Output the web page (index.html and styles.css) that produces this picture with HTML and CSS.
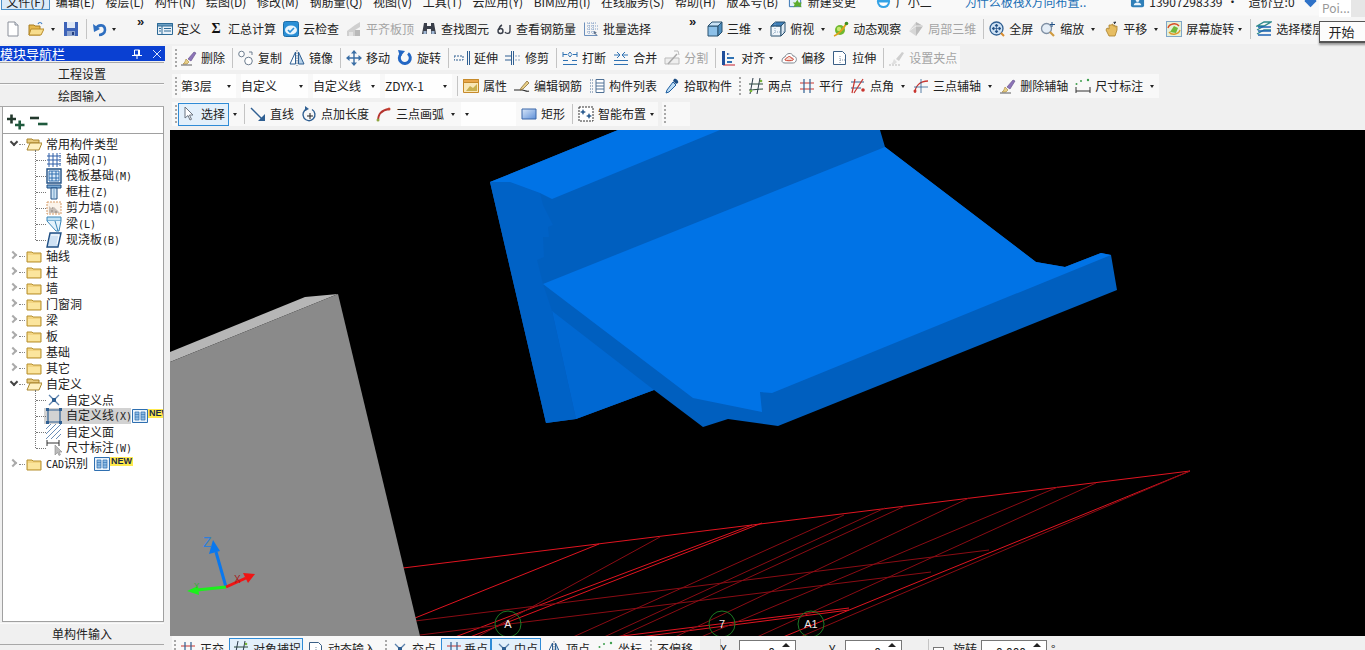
FILE: index.html
```html
<!DOCTYPE html>
<html lang="zh-CN">
<head>
<meta charset="utf-8">
<title>模块导航栏</title>
<link rel="stylesheet" href="styles.css">
</head>
<body>
<svg class="sprite" aria-hidden="true">
  <symbol id="new" viewBox="0 0 16 16"><path d="M3 1h7l3 3v11H3z" fill="#fff" stroke="#8a8f99"/><path d="M10 1v3h3" fill="#dfe6ef" stroke="#8a8f99"/></symbol>
  <symbol id="open" viewBox="0 0 16 16"><path d="M1 4h5l1 1h5v9H1z" fill="#e6b84e" stroke="#a67c22"/><path d="M3 8h13l-3 6H1z" fill="#f7dd8d" stroke="#b98c2b"/><path d="M10 3c1-2 3-2 4 0" fill="none" stroke="#3f7fc7" stroke-width="1.2"/></symbol>
  <symbol id="save" viewBox="0 0 16 16"><path d="M1 1h14v14H1z" fill="#3d63b8"/><path d="M4 1h8v6H4z" fill="#dfe8f6"/><path d="M4 10h8v5H4z" fill="#8da4cf"/><path d="M9 11h2v3H9z" fill="#233f80"/></symbol>
  <symbol id="undo" viewBox="0 0 16 16"><path d="M4 8c2-5 9-5 9 1 0 3-3 5-6 5" fill="none" stroke="#2f6fc0" stroke-width="2.6"/><path d="M1 3l1 8 6-3z" fill="#2f6fc0"/></symbol>
  <symbol id="define" viewBox="0 0 16 16"><path d="M.5 2.5h15v11H.5z" fill="#e8f0f8" stroke="#2d6a96"/><path d="M.5 2.5h15v2.500H.5z" fill="#6da0c4" stroke="#2d6a96"/><path d="M5 5v8M2 7.500h2M2 10h2M7 7.500h7M7 10h7" stroke="#2d6a96"/></symbol>
  <symbol id="cloud" viewBox="0 0 16 16"><rect x=".5" y=".5" width="15" height="15" rx="2" fill="#2a8fd6" stroke="#1c6da8"/><ellipse cx="8" cy="9" rx="6" ry="4.500" fill="#e9f5fd"/><path d="M5 9l2 2 4-4" fill="none" stroke="#2a8fd6" stroke-width="1.600"/></symbol>
  <symbol id="flat" viewBox="0 0 16 16"><path d="M1 10l8-6 5-3v5l-5 3v6H1z" fill="#cfcfcf"/><path d="M9 9h5v6H9z" fill="#b9b9b9"/><path d="M3 11h4v4H3z" fill="#e4e4e4"/></symbol>
  <symbol id="binoc" viewBox="0 0 16 16"><path d="M3 2h3v3h4V2h3l2 11H10V8H6v5H1z" fill="#3a3f4a"/><path d="M2.500 10h3v3h-3zM10.500 10h3v3h-3z" fill="#9fb7d4"/></symbol>
  <symbol id="rebar" viewBox="0 0 16 16"><circle cx="4.500" cy="10" r="2.500" fill="none" stroke="#3a3f4a" stroke-width="1.400"/><path d="M3 9c0-3 1-4 3-5M14 4v6c0 3-4 3-5 1" fill="none" stroke="#3a3f4a" stroke-width="1.400"/></symbol>
  <symbol id="batch" viewBox="0 0 16 16"><path d="M1.500 1.500v13h13" fill="none" stroke="#6b8fbc"/><path d="M4 2h9M4 5h11M4 8h11M4 11h7M6 2v12M10 2v12" stroke="#7f9cc4" stroke-dasharray="1 1"/><path d="M11 10l3 1.500-1.500 .5 1.500 2-1 .5-1-2-1 1z" fill="#5d6f88"/></symbol>
  <symbol id="cube" viewBox="0 0 16 16"><path d="M1 5v10h10V5z" fill="#8cc0e8" stroke="#28506f"/><path d="M1 5l4-4h10l-4 4z" fill="#c9e2f5" stroke="#28506f"/><path d="M11 5l4-4v10l-4 4z" fill="#4f8fc0" stroke="#28506f"/></symbol>
  <symbol id="topview" viewBox="0 0 16 16"><path d="M1 5v10h10V5z" fill="#f1f6fb" stroke="#28506f"/><path d="M1 5l4-4h10l-4 4z" fill="#3f7fb8" stroke="#28506f"/><path d="M11 5l4-4v10l-4 4z" fill="#dfeaf4" stroke="#28506f"/><path d="M5 1v10H15M5 11l-4 4" fill="none" stroke="#8aa6bf" stroke-dasharray="1 1"/></symbol>
  <symbol id="orbit" viewBox="0 0 16 16"><circle cx="7" cy="9" r="5" fill="#6fb82f"/><circle cx="6" cy="8" r="2.200" fill="#c5e86f"/><path d="M1 15c3-1 9-6 12-12" fill="none" stroke="#e0a11b" stroke-width="1.800"/><circle cx="13.500" cy="2.500" r="1.800" fill="#3f8f1f"/></symbol>
  <symbol id="local3d" viewBox="0 0 16 16"><path d="M8 1l7 4-7 10-7-5z" fill="#d6d6d6"/><path d="M8 1v14l7-10z" fill="#bcbcbc"/><path d="M1 10l7-5 7 0" fill="none" stroke="#eee"/></symbol>
  <symbol id="full" viewBox="0 0 16 16"><circle cx="7.500" cy="7.500" r="6.500" fill="#cfe2f4" stroke="#2f5f92" stroke-width="1.300"/><path d="M7.500 3.500v8M3.500 7.500h8M7.500 3l-1.500 2h3zM7.500 12l-1.500-2h3zM3 7.500l2-1.500v3zM12 7.500l-2-1.500v3z" fill="#1f4f84" stroke="#1f4f84" stroke-width=".7"/><path d="M12 12l3 3" stroke="#d88b2c" stroke-width="2"/></symbol>
  <symbol id="zoom" viewBox="0 0 16 16"><circle cx="6.500" cy="7.500" r="5" fill="#e4edf6" stroke="#7f8fa3" stroke-width="1.300"/><path d="M10 11l4 4" stroke="#cf9a3e" stroke-width="2.200"/><path d="M12 1v5M10 3.500h5" stroke="#1f4f84"/></symbol>
  <symbol id="pan" viewBox="0 0 16 16"><path d="M3 9l3 6h6l2-6V5l-2 1V4l-2 1V3L8 4 6 4v4L4 7z" fill="#e6bd62" stroke="#a87f2a" stroke-width=".8"/><path d="M10 1l3-.5-1 2.500z" fill="#3a3f4a"/><path d="M11 3l2-2" stroke="#3a3f4a"/></symbol>
  <symbol id="srot" viewBox="0 0 16 16"><rect x=".5" y=".5" width="15" height="15" fill="#e6f0d8" stroke="#7fa6c8"/><path d="M4 11l4-6 4 2-2 5z" fill="#71b83a"/><path d="M2 7c1-4 8-6 11-2" fill="none" stroke="#d84b24" stroke-width="1.400"/><path d="M14 9c-1 4-8 6-11 2" fill="none" stroke="#e09a28" stroke-width="1.400"/></symbol>
  <symbol id="floors" viewBox="0 0 16 16"><path d="M1 5l7-4h7L8 5zM1 9l7-4M1 13l7-4h7" fill="none" stroke="#2d8a8a" stroke-width="1.300"/><path d="M2 6h13M2 10h13M2 14h13" stroke="#1e63b4" stroke-width="1.500"/></symbol>
  <symbol id="brush" viewBox="0 0 16 16"><path d="M7 9l6-7 2 1-5 8z" fill="#8d74b8" stroke="#5e4a85" stroke-width=".6"/><path d="M5 9l3 3-2 2H2c2-1 2-3 3-5z" fill="#e8cf86" stroke="#a5853a" stroke-width=".6"/><path d="M0 15h11" stroke="#5a5a5a"/></symbol>
  <symbol id="brushg" viewBox="0 0 16 16"><path d="M7 9l6-7 2 1-5 8z" fill="#cfcfcf"/><path d="M5 9l3 3-2 2H2c2-1 2-3 3-5z" fill="#e0e0e0"/><path d="M0 15h11" stroke="#bbb" stroke-dasharray="2 1"/></symbol>
  <symbol id="copy" viewBox="0 0 16 16"><circle cx="3.500" cy="4" r="2.800" fill="#fff" stroke="#6d7d8f"/><circle cx="10.500" cy="11" r="3.800" fill="#fff" stroke="#6d7d8f"/><path d="M11 2l3 0M14 2v3" stroke="#6d7d8f" fill="none"/></symbol>
  <symbol id="mirror" viewBox="0 0 16 16"><path d="M6.500 2L1 14h5.500z" fill="#fff" stroke="#2f5f92"/><path d="M9.500 2L15 14H9.500z" fill="#b7d2ea" stroke="#2f5f92"/><path d="M8 0v16" stroke="#6d7d8f" stroke-dasharray="1.500 1"/></symbol>
  <symbol id="move" viewBox="0 0 16 16"><path d="M8 1v14M1 8h14" stroke="#3a6ea5" stroke-width="1.400"/><path d="M8 0l3 3.500H5zM8 16l3-3.500H5zM0 8l3.500-3v6zM16 8l-3.500-3v6z" fill="#3a6ea5"/></symbol>
  <symbol id="rotate" viewBox="0 0 16 16"><path d="M11 3.500A5.500 5.500 0 1 1 4 4" fill="none" stroke="#2367c4" stroke-width="3"/><path d="M1 0l7 1-5 6z" fill="#2367c4"/></symbol>
  <symbol id="extend" viewBox="0 0 16 16"><path d="M13.500 1v14M15.500 1v14" stroke="#2f5f92"/><path d="M0 6h9v4H0z" fill="none" stroke="#2f5f92" stroke-dasharray="2 1"/></symbol>
  <symbol id="trim" viewBox="0 0 16 16"><path d="M6.500 1v14M8.500 1v14" stroke="#2f5f92"/><path d="M0 6h6M0 10h6" stroke="#2f5f92"/><path d="M10 6h6M10 10h6" stroke="#8ba3bf" stroke-dasharray="2 1"/></symbol>
  <symbol id="break" viewBox="0 0 16 16"><path d="M1 10.500h5M10 10.500h5M1 14.500h14" stroke="#2f72b3"/><path d="M1 4.500h4M11 4.500h4" stroke="#2f72b3" stroke-width="1.200"/><path d="M1 2v5M15 2v5M8 2l-2 2.500L8 7M8 2l2 2.500L8 7" fill="none" stroke="#2f72b3"/></symbol>
  <symbol id="merge" viewBox="0 0 16 16"><path d="M1 10.500h14M1 14.500h14" stroke="#2f72b3"/><path d="M1 5h5M10 5h5M4 2l3 3-3 3M12 2L9 5l3 3" fill="none" stroke="#2f72b3"/></symbol>
  <symbol id="split" viewBox="0 0 16 16"><path d="M1 8h14v6H1z" fill="#eee" stroke="#bbb"/><path d="M4 14l9-10" stroke="#aaa" stroke-width="1.500"/><path d="M10 1l4 0 1 4" fill="none" stroke="#bbb"/></symbol>
  <symbol id="align" viewBox="0 0 16 16"><path d="M2 1v14h12" fill="none" stroke="#c21f2f" stroke-width="1"/><path d="M1 1h3v14H1z" fill="#1f4f9c"/><path d="M6 7h7v2H6zM6 11h5v2H6z" fill="#2f72b3"/><path d="M6 3l3 1-3 1z" fill="#1f4f9c"/></symbol>
  <symbol id="offset" viewBox="0 0 16 16"><path d="M1 11c0-3 2-4 3-4 1-4 7-5 8-1 3 0 4 3 3 5-1 2-2 2-4 2H4c-2 0-3-1-3-2z" fill="#fff" stroke="#7f8790"/><path d="M4 10c0-1 1-2 2-2 1-2 4-2 4 0 2 0 3 1 2 2s-7 1-8 0z" fill="#f4d7cf" stroke="#c8402f"/></symbol>
  <symbol id="stretch" viewBox="0 0 16 16"><path d="M1.500 1.500h9l3 3v10h-12z" fill="#fff" stroke="#3a5f86"/><path d="M8 6v8M8 10l5 0" stroke="#7f8fa3" stroke-dasharray="1 1"/></symbol>
  <symbol id="attr" viewBox="0 0 16 16"><path d="M.5 1.500h15v13H.5z" fill="#f9e7b7" stroke="#c68a2b"/><path d="M.5 1.500h15v3H.5z" fill="#e8a64a" stroke="#c68a2b"/><path d="M3 13l4-5 3 2 4-4v7z" fill="#c9b04f"/></symbol>
  <symbol id="editbar" viewBox="0 0 16 16"><path d="M0 12h8c3 0 4 2 7 1" fill="none" stroke="#222" stroke-width="1.200"/><path d="M7 10l6-7 2 2-6 6-3 1z" fill="#e8cf86" stroke="#7b5f2a" stroke-width=".7"/></symbol>
  <symbol id="list" viewBox="0 0 16 16"><path d="M7 1.500h8v13H7z" fill="#fff" stroke="#4f7196"/><path d="M7 5h8M7 8h8M7 11h8" stroke="#4f7196"/><path d="M1 2h3M1 5h3M1 8h3M1 11h3M1 14h3" stroke="#4f7196" stroke-dasharray="1 1"/></symbol>
  <symbol id="pick" viewBox="0 0 16 16"><path d="M10 1c2-1 5 2 4 4l-2 1-3-3z" fill="#1f4f84"/><path d="M9 4l3 3-7 7-3 1 1-3z" fill="#bcdcf5" stroke="#1f5fa0"/></symbol>
  <symbol id="twopt" viewBox="0 0 16 16"><path d="M1 12c4 0 10-1 14-1M1 6h14" stroke="#2b4b3a"/><path d="M5 0l-3 16M12 0L9 16" stroke="#2b3b4a"/><circle cx="13" cy="3" r="1.300" fill="#77b53a"/><circle cx="3" cy="13" r="1.300" fill="#77b53a"/></symbol>
  <symbol id="para" viewBox="0 0 16 16"><path d="M1 5h14M1 11h14" stroke="#c8352f" stroke-width="1.200"/><path d="M5 1v14M11 1v14" stroke="#2f5f92" stroke-width="1.200"/></symbol>
  <symbol id="ang" viewBox="0 0 16 16"><path d="M1 4h13M1 10h10" stroke="#2f5f92"/><path d="M5 1l-3 14M13 1L4 15" stroke="#c8352f" stroke-width="1.200"/><circle cx="13" cy="12" r="1.800" fill="#c8352f"/></symbol>
  <symbol id="arcpt" viewBox="0 0 16 16"><path d="M2 15C2 8 7 3 15 3" fill="none" stroke="#c8352f" stroke-width="1.300"/><path d="M1 9h14M8 1v14" stroke="#2f5f92" stroke-width=".8"/><circle cx="2" cy="13" r="1.500" fill="#c8352f"/></symbol>
  <symbol id="dim" viewBox="0 0 16 16"><path d="M1 9v6M15 9v6M1 13h14" stroke="#333"/><circle cx="1.500" cy="6" r="1" fill="#3f9f4f"/><circle cx="6" cy="3" r="1" fill="#3f9f4f"/><circle cx="13" cy="2" r="1.200" fill="#3f9f4f"/></symbol>
  <symbol id="cursor" viewBox="0 0 16 16"><path d="M4 1v11l3-2.500L9 14l1.500-.7-2-4.300H12z" fill="#fff" stroke="#6b7480"/></symbol>
  <symbol id="lineto" viewBox="0 0 16 16"><path d="M1 2l12 12" stroke="#2f5f92" stroke-width="1.500"/><path d="M15 15V8l-7 7z" fill="#2f5f92"/></symbol>
  <symbol id="addlen" viewBox="0 0 16 16"><path d="M6 3a6 6 0 1 0 5 .5" fill="none" stroke="#2f5f92" stroke-width="1.400"/><path d="M4 0l4 3-4 2z" fill="#2f5f92"/><path d="M9 7v6M6 10h6" stroke="#222"/></symbol>
  <symbol id="arc" viewBox="0 0 16 16"><path d="M2 15C2 8 6 4 13 3" fill="none" stroke="#b5342f" stroke-width="1.800"/><circle cx="2" cy="14" r="1.500" fill="#8fa640"/><circle cx="13" cy="3" r="1.500" fill="#c8402f"/></symbol>
  <symbol id="rect" viewBox="0 0 16 16"><defs><linearGradient id="rg" x1="0" y1="0" x2="1" y2="1"><stop offset="0" stop-color="#d8e6f8"/><stop offset="1" stop-color="#5d8fd8"/></linearGradient></defs><path d="M1 3h14v10H1z" fill="url(#rg)" stroke="#3a66a8"/></symbol>
  <symbol id="smart" viewBox="0 0 16 16"><path d="M1 1h14v14H1z" fill="#fff" stroke="#333" stroke-dasharray="2 1"/><path d="M5 3l1 2 2 1-2 1-1 2-1-2-2-1 2-1zM11 7l1 2 2 1-2 1-1 2-1-2-2-1 2-1z" fill="#2f5f92"/></symbol>
  <symbol id="folder" viewBox="0 0 16 16"><path d="M1 4h5l1 1h8v9H1z" fill="#f3d583" stroke="#b6902f"/><path d="M2 7h12v6H2z" fill="#fbe59d"/></symbol>
  <symbol id="folderopen" viewBox="0 0 16 16"><path d="M1 3h5l1 1h6v3H1z" fill="#e8cb7d" stroke="#a9852d"/><path d="M1 14l3-7h12l-3 7z" fill="#fff1c0" stroke="#a9852d"/></symbol>
  <symbol id="tgrid" viewBox="0 0 16 16"><path d="M3 1v14M7 1v14M11 1v14M1 4h14M1 8h14M1 12h14" stroke="#2f5fa8"/><path d="M14 1v14" stroke="#2f5fa8" stroke-dasharray="1 1"/></symbol>
  <symbol id="traft" viewBox="0 0 16 16"><path d="M1 1h14v14H1z" fill="#fff" stroke="#1f4f84" stroke-width="1.400"/><path d="M3 3h10v10H3z" fill="#dcebf8" stroke="#2f6fb0"/><path d="M6 3v10M10 3v10M3 6h10M3 10h10" stroke="#2f6fb0"/></symbol>
  <symbol id="tcol" viewBox="0 0 16 16"><path d="M1 1h14v3H1z" fill="#79a9d4" stroke="#1f4f84"/><path d="M5 4h6v11H5z" fill="#cfe3f4" stroke="#1f4f84"/><path d="M8 4v11" stroke="#6f9fc8"/></symbol>
  <symbol id="twall" viewBox="0 0 16 16"><path d="M1 2h14v12H1z" fill="#fbf3ea" stroke="#d79b67" stroke-dasharray="2 1"/><path d="M3 6l2 2 3-1 3 3 3 3H3z" fill="#c6bdb6"/><path d="M5 11h2M9 12h2M6 8h1" stroke="#8d8278"/></symbol>
  <symbol id="tbeam" viewBox="0 0 16 16"><path d="M1 1h14v4H1z" fill="#bfe0f5" stroke="#3a86b8"/><path d="M1 5l9 10h3l2-10" fill="#e4f2fb" stroke="#3a86b8"/><path d="M9 5l3 10" stroke="#3a86b8"/></symbol>
  <symbol id="tslab" viewBox="0 0 16 16"><path d="M4 1h11l-3 14H1z" fill="#cfe2f4" stroke="#1f4f84" stroke-width="1.400"/><path d="M5 3h8l-2 9" fill="none" stroke="#fff"/></symbol>
  <symbol id="tpoint" viewBox="0 0 16 16"><path d="M3 3l10 10M13 3L3 13" stroke="#5c82ad" stroke-width="1.300"/><rect x="6" y="6" width="4" height="4" fill="#2f5f92"/></symbol>
  <symbol id="tline" viewBox="0 0 16 16"><path d="M2 2h12v12H2z" fill="none" stroke="#2f5f92" stroke-width="1.200"/><path d="M0 0h3v3H0zM13 0h3v3h-3zM0 13h3v3H0zM13 13h3v3h-3z" fill="#2f5f92"/></symbol>
  <symbol id="tarea" viewBox="0 0 16 16"><path d="M0 5l5-5M0 10L10 0M0 15L15 0M5 15L15 5M10 15l5-5" stroke="#6a8eb8"/></symbol>
  <symbol id="tdim" viewBox="0 0 16 16"><path d="M1 0v6M13 0v6M1 3h12" stroke="#333"/><path d="M9 5v10l2.500-2.500 1.500 3 1.500-.8-1.500-2.700H16z" fill="#bcbcbc" stroke="#888" stroke-width=".6"/></symbol>
  <symbol id="book" viewBox="0 0 16 16"><path d="M.5 1.500h15v13H.5z" fill="#eaf3fb" stroke="#2f6fb0"/><path d="M3 4h4v8H3zM9 4h4v8H9z" fill="#8fbce4" stroke="#2f6fb0" stroke-width=".7"/><path d="M3 6.500h4M3 9h4M9 6.500h4M9 9h4" stroke="#2f6fb0" stroke-width=".6"/></symbol>
  <symbol id="plusplus" viewBox="0 0 18 16"><path d="M0 5h9M4.500 .5v9" stroke="#23392d" stroke-width="2.600"/><path d="M8 11h9.500M12.700 6.500v9" stroke="#1f5a3e" stroke-width="2.600"/></symbol>
  <symbol id="minusminus" viewBox="0 0 18 16"><path d="M0 4h9" stroke="#23392d" stroke-width="2.600"/><path d="M8 10h9.500" stroke="#1f5a3e" stroke-width="2.600"/></symbol>
  <symbol id="pin" viewBox="0 0 10 10"><path d="M2.500 1h5v5h-5zM0 6.500h10M5 7v3" fill="none" stroke="#fff"/><path d="M6 1h1.500v5H6z" fill="#fff"/></symbol>
  <symbol id="close" viewBox="0 0 10 10"><path d="M1 1l8 8M9 1L1 9" stroke="#dbe4fb"/></symbol>
  <symbol id="newchange" viewBox="0 0 16 16"><path d="M1.500 2.500h12v11h-12z" fill="#e4f0fa" stroke="#2f6fb0"/><path d="M10 6l1.500 3h3l-1 3 1 2-4.500-1-4 1 1-3-2-2h3z" fill="#5cab2c"/></symbol>
  <symbol id="xiaoer" viewBox="0 0 16 16"><circle cx="8" cy="8" r="7" fill="#35a3e6"/><path d="M3 9c2 5 8 5 10 0z" fill="#fff"/></symbol>
  <symbol id="phone" viewBox="0 0 16 16"><rect x="1" y="2" width="14" height="12" rx="2" fill="#2f7fb8"/><circle cx="8" cy="6.500" r="2" fill="#e8f3fb"/><path d="M4 12c0-4 8-4 8 0z" fill="#e8f3fb"/></symbol>
  <symbol id="shield" viewBox="0 0 16 16"><path d="M1 1h14v7l-7 7-7-7z" fill="#2f72c8"/></symbol>
</svg>

<div class="app">
  <header class="menubar">
    <span class="menu active">文件(F)</span><span class="menu">编辑(E)</span><span class="menu">楼层(L)</span><span class="menu">构件(N)</span><span class="menu">绘图(D)</span><span class="menu">修改(M)</span><span class="menu">钢筋量(Q)</span><span class="menu">视图(V)</span><span class="menu">工具(T)</span><span class="menu">云应用(Y)</span><span class="menu">BIM应用(I)</span><span class="menu">在线服务(S)</span><span class="menu">帮助(H)</span><span class="menu">版本号(B)</span>
    <span class="menu-tool change"><svg class="i"><use href="#newchange"/></svg>新建变更</span>
    <span class="menu-tool xiaoer"><svg class="i"><use href="#xiaoer"/></svg>广小二</span>
    <span class="menu-link">为什么板筏X方向布置..</span>
    <span class="menu-tool phone"><svg class="i"><use href="#phone"/></svg>13907298339</span>
    <span class="menu-dot">•</span>
    <span class="menu-plain">造价豆:0</span>
    <svg class="i shield"><use href="#shield"/></svg>
  </header>

  <div class="toolbar top">
    <span class="tool"><svg class="i"><use href="#new"/></svg></span>
    <span class="tool"><svg class="i"><use href="#open"/></svg><b class="caret wide"></b></span>
    <span class="tool"><svg class="i"><use href="#save"/></svg></span>
    <i class="sep"></i>
    <span class="tool"><svg class="i"><use href="#undo"/></svg><b class="caret"></b></span>
    <span class="more first">»</span>
    <span class="tool"><svg class="i"><use href="#define"/></svg>定义</span>
    <span class="tool"><span class="i sigma">Σ</span>汇总计算</span>
    <span class="tool"><svg class="i"><use href="#cloud"/></svg>云检查</span>
    <span class="tool off"><svg class="i"><use href="#flat"/></svg>平齐板顶</span>
    <span class="tool"><svg class="i"><use href="#binoc"/></svg>查找图元</span>
    <span class="tool"><svg class="i"><use href="#rebar"/></svg>查看钢筋量</span>
    <span class="tool"><svg class="i"><use href="#batch"/></svg>批量选择</span>
    <span class="more second">»</span>
    <span class="tool"><svg class="i"><use href="#cube"/></svg>三维<b class="caret wide"></b></span>
    <span class="tool"><svg class="i"><use href="#topview"/></svg>俯视<b class="caret wide"></b></span>
    <span class="tool"><svg class="i"><use href="#orbit"/></svg>动态观察</span>
    <span class="tool off"><svg class="i"><use href="#local3d"/></svg>局部三维</span>
    <i class="sep"></i>
    <span class="tool"><svg class="i"><use href="#full"/></svg>全屏</span>
    <span class="tool"><svg class="i"><use href="#zoom"/></svg>缩放<b class="caret wide"></b></span>
    <span class="tool"><svg class="i"><use href="#pan"/></svg>平移<b class="caret wide"></b></span>
    <span class="tool"><svg class="i"><use href="#srot"/></svg>屏幕旋转<b class="caret"></b></span>
    <i class="sep"></i>
    <span class="tool"><svg class="i"><use href="#floors"/></svg>选择楼层</span>
  </div>

  <div class="workspace">
    <aside class="nav">
      <div class="nav-title"><span>模块导航栏</span><svg class="nav-btn"><use href="#pin"/></svg><svg class="nav-btn"><use href="#close"/></svg></div>
      <div class="nav-tab">工程设置</div>
      <div class="nav-tab">绘图输入</div>
      <div class="nav-box">
        <div class="nav-tools"><svg class="tree-btn"><use href="#plusplus"/></svg><svg class="tree-btn"><use href="#minusminus"/></svg></div>
        <div class="tree">
          <div class="node open"><i class="chev down"></i><svg class="i"><use href="#folderopen"/></svg>常用构件类型</div>
          <div class="children">
            <div class="leaf"><svg class="i"><use href="#tgrid"/></svg><span>轴网<span class="lat">(J)</span></span></div>
            <div class="leaf"><svg class="i"><use href="#traft"/></svg><span>筏板基础<span class="lat">(M)</span></span></div>
            <div class="leaf"><svg class="i"><use href="#tcol"/></svg><span>框柱<span class="lat">(Z)</span></span></div>
            <div class="leaf"><svg class="i"><use href="#twall"/></svg><span>剪力墙<span class="lat">(Q)</span></span></div>
            <div class="leaf"><svg class="i"><use href="#tbeam"/></svg><span>梁<span class="lat">(L)</span></span></div>
            <div class="leaf"><svg class="i"><use href="#tslab"/></svg><span>现浇板<span class="lat">(B)</span></span></div>
          </div>
          <div class="node"><i class="chev"></i><svg class="i"><use href="#folder"/></svg>轴线</div>
          <div class="node"><i class="chev"></i><svg class="i"><use href="#folder"/></svg>柱</div>
          <div class="node"><i class="chev"></i><svg class="i"><use href="#folder"/></svg>墙</div>
          <div class="node"><i class="chev"></i><svg class="i"><use href="#folder"/></svg>门窗洞</div>
          <div class="node"><i class="chev"></i><svg class="i"><use href="#folder"/></svg>梁</div>
          <div class="node"><i class="chev"></i><svg class="i"><use href="#folder"/></svg>板</div>
          <div class="node"><i class="chev"></i><svg class="i"><use href="#folder"/></svg>基础</div>
          <div class="node"><i class="chev"></i><svg class="i"><use href="#folder"/></svg>其它</div>
          <div class="node open"><i class="chev down"></i><svg class="i"><use href="#folderopen"/></svg>自定义</div>
          <div class="children short">
            <div class="leaf"><svg class="i"><use href="#tpoint"/></svg><span>自定义点</span></div>
            <div class="leaf"><span class="selected"><svg class="i"><use href="#tline"/></svg><span>自定义线<span class="lat">(X)</span></span></span><svg class="i"><use href="#book"/></svg><em class="new">NEW</em></div>
            <div class="leaf"><svg class="i"><use href="#tarea"/></svg><span>自定义面</span></div>
            <div class="leaf"><svg class="i"><use href="#tdim"/></svg><span>尺寸标注<span class="lat">(W)</span></span></div>
          </div>
          <div class="node"><i class="chev"></i><svg class="i"><use href="#folder"/></svg><span><span class="lat">CAD</span>识别</span><svg class="i cad-book"><use href="#book"/></svg><em class="new">NEW</em></div>
        </div>
      </div>
      <div class="nav-tab bottom">单构件输入</div>
    </aside>

    <main class="main">
      <div class="toolbar row">
        <div class="strip s2">
          <i class="grip"></i>
          <span class="tool"><svg class="i"><use href="#brush"/></svg>删除</span><i class="sep"></i>
          <span class="tool"><svg class="i"><use href="#copy"/></svg>复制</span>
          <span class="tool"><svg class="i"><use href="#mirror"/></svg>镜像</span><i class="sep"></i>
          <span class="tool"><svg class="i"><use href="#move"/></svg>移动</span>
          <span class="tool"><svg class="i"><use href="#rotate"/></svg>旋转</span><i class="sep"></i>
          <span class="tool"><svg class="i"><use href="#extend"/></svg>延伸</span>
          <span class="tool"><svg class="i"><use href="#trim"/></svg>修剪</span><i class="sep"></i>
          <span class="tool"><svg class="i"><use href="#break"/></svg>打断</span>
          <span class="tool"><svg class="i"><use href="#merge"/></svg>合并</span>
          <span class="tool off"><svg class="i"><use href="#split"/></svg>分割</span><i class="sep"></i>
          <span class="tool"><svg class="i"><use href="#align"/></svg>对齐<b class="caret"></b></span>
          <span class="tool"><svg class="i"><use href="#offset"/></svg>偏移</span>
          <span class="tool"><svg class="i"><use href="#stretch"/></svg>拉伸</span><i class="sep"></i>
          <span class="tool off"><svg class="i"><use href="#brushg"/></svg>设置夹点</span>
        </div>
      </div>
      <div class="toolbar row">
        <div class="strip s3">
          <i class="grip"></i>
          <span class="combo c1">第3层<b class="caret"></b></span>
          <span class="combo c2">自定义<b class="caret"></b></span>
          <span class="combo c2">自定义线<b class="caret"></b></span>
          <span class="combo c2">ZDYX-1<b class="caret"></b></span><i class="sep"></i>
          <span class="tool"><svg class="i"><use href="#attr"/></svg>属性</span>
          <span class="tool"><svg class="i"><use href="#editbar"/></svg>编辑钢筋</span>
          <span class="tool"><svg class="i"><use href="#list"/></svg>构件列表</span>
          <span class="tool"><svg class="i"><use href="#pick"/></svg>拾取构件</span>
          <i class="grip mid"></i>
          <span class="tool"><svg class="i"><use href="#twopt"/></svg>两点</span>
          <span class="tool"><svg class="i"><use href="#para"/></svg>平行</span>
          <span class="tool"><svg class="i"><use href="#ang"/></svg>点角<b class="caret wide"></b></span>
          <span class="tool"><svg class="i"><use href="#arcpt"/></svg>三点辅轴<b class="caret wide"></b></span>
          <span class="tool"><svg class="i"><use href="#brush"/></svg>删除辅轴</span>
          <span class="tool"><svg class="i"><use href="#dim"/></svg>尺寸标注<b class="caret wide"></b></span>
        </div>
      </div>
      <div class="toolbar row last">
        <div class="strip s4">
          <i class="grip tight"></i>
          <span class="split"><span class="tool pressed"><svg class="i"><use href="#cursor"/></svg>选择</span><b class="caret narrow"></b></span><i class="sep"></i>
          <span class="tool"><svg class="i"><use href="#lineto"/></svg>直线</span>
          <span class="tool"><svg class="i"><use href="#addlen"/></svg>点加长度</span>
          <span class="tool"><svg class="i"><use href="#arc"/></svg>三点画弧<b class="caret wide"></b></span>
          <span class="combo c4"><b class="caret"></b></span>
          <span class="tool"><svg class="i"><use href="#rect"/></svg>矩形</span><i class="sep"></i>
          <span class="tool"><svg class="i"><use href="#smart"/></svg>智能布置<b class="caret"></b></span>
        </div>
        <div class="strip tail"><i class="grip"></i></div>
      </div>

      <div class="canvas">
        <svg class="scene" viewBox="170 130 1195 506" width="1195" height="506">
          <g class="rl hot">
            <path d="M403 568L1190 471"/>
            <path d="M599 544L415 618"/>
            <path d="M762 523L470 637"/>
            <path d="M752 525L455 637"/>
            <path d="M1190 471L783 637"/>
            <path d="M614 637L849 608"/>
            <path d="M640 637L849 610"/>
          </g>
          <g class="rl">
            <path d="M660 537L477 637"/>
            <path d="M844 515L573 637"/>
            <path d="M885 508L604 637"/>
            <path d="M905 506L619 637"/>
            <path d="M969 498L675 637"/>
            <path d="M1058 487L701 637"/>
            <path d="M1096 483L757 637"/>
            <path d="M1190 471L800 637"/>
            <path d="M415 621L989 550"/>
            <path d="M420 635L931 572"/>
          </g>
          <g class="grid-mark">
            <circle cx="508" cy="624" r="13"/><text x="508" y="628">A</text>
            <circle cx="722" cy="624" r="13"/><text x="722" y="628">7</text>
            <circle cx="811" cy="624" r="13"/><text x="811" y="628">A1</text>
          </g>
          <polygon class="wall-top" points="170,352 305,297 338,294 170,362"/>
          <polygon class="wall" points="170,362 338,294 420,636 170,636"/>
          <polygon class="bl-d" points="490,182 618,130 880,130 885,147 1036,262 1065,267 1101,253 1111,255 1117,290 778,426 728,419 703,427 654,390 576,419 546,423"/>
          <polygon class="bl-c" points="552,311 576,419 654,390"/>
          <polygon class="bl-m" points="490,182 510,182 540,193 543,205 553,225 548,227 549,237 543,237 544,257 537,260 543,284 552,311 576,419 546,423"/>
          <polygon class="bl-t" points="490,182 618,130 720,130 552,199 540,193 510,182"/>
          <polygon class="bl-t" points="543,284 885,147 1036,262 1065,267 1101,253 1111,255 772,393 760,392 762,412 693,398"/>
          <g class="gizmo">
            <path class="gz" d="M226 587L216 552"/><polygon class="gz-f" points="213,540 209,554 220,551"/>
            <path class="gg" d="M226 587L197 590"/><polygon class="gg-f" points="187,591 198,586 199,595"/>
            <path class="gr" d="M226 587L246 578"/><polygon class="gr-f" points="255,574 243,573 248,583"/>
            <text class="lz" x="203" y="547">Z</text>
            <text class="ly" x="194" y="588">Y</text>
            <text class="lx" x="234" y="583">X</text>
          </g>
        </svg>
      </div>

      <div class="statusbar">
        <div class="strip st">
          <i class="grip"></i>
          <span class="tool st-first"><svg class="i"><use href="#para"/></svg>正交</span>
          <span class="tool pressed osnap"><svg class="i"><use href="#twopt"/></svg>对象捕捉</span>
          <span class="tool"><svg class="i"><use href="#stretch"/></svg>动态输入</span>
          <i class="grip after"></i>
          <span class="tool"><svg class="i"><use href="#tpoint"/></svg>交点</span>
          <span class="tool pressed snap"><svg class="i"><use href="#para"/></svg>垂点</span>
          <span class="tool pressed snap"><svg class="i"><use href="#tpoint"/></svg>中点</span>
          <span class="tool vertex"><svg class="i"><use href="#mirror"/></svg>顶点</span>
          <span class="tool coord"><svg class="i"><use href="#dim"/></svg>坐标</span>
          <i class="grip after2"></i>
          <span class="status-text">不偏移</span>
        </div>
        <i class="sep s-sep"></i>
        <span class="field-label">X</span><span class="field">0<b class="spin"></b></span>
        <span class="field-label y">Y</span><span class="field">0<b class="spin"></b></span>
        <i class="sep s-sep2"></i>
        <i class="check"></i>
        <span class="status-text rot">旋转</span><span class="field long">0.000<b class="spin"></b></span>
        <span class="status-text">°</span>
      </div>
    </main>
  </div>

  <div class="popup-tab"><span>Poi...</span></div>
  <div class="popup-start">开始</div>
</div>
</body>
</html>
```

FILE: styles.css
```css
* { box-sizing: border-box; }
html, body { margin: 0; padding: 0; height: 650px; overflow: hidden; background: #f0f0f0; }
body { font: 12px/16px "Noto Sans CJK SC", "Liberation Sans", sans-serif; color: #222; }
.sprite { position: absolute; width: 0; height: 0; overflow: hidden; }
.app { position: relative; width: 1365px; height: 650px; overflow: hidden; }
.i { width: 16px; height: 16px; flex: none; display: block; }

.menubar { display: flex; align-items: center; height: 17px; margin-top: -7px; padding-left: 1px; white-space: nowrap; background: #f9f9f9; overflow: visible; }
.menu { padding: 0 4.300px; border: 1px solid transparent; height: 17px; line-height: 15px; }
.menu.active { background: #dcebf8; border-color: #4a90c8; }
.menu-tool { display: flex; align-items: center; gap: 5px; }
.menu-tool .i { width: 15px; height: 15px; }
.change { margin-left: 4px; }
.xiaoer { margin-left: 20px; }
.menu-link { margin-left: 33px; color: #1a6fb5; }
.phone { margin-left: 44px; gap: 4px; }
.menu-dot { margin-left: 4px; }
.menu-plain { margin-left: 10px; }
.shield { width: 13px; height: 13px; margin-left: 9px; }

.toolbar { display: flex; align-items: center; gap: 7px; white-space: nowrap; }
.toolbar.top { height: 34px; padding: 4px 0 0 5px; background: linear-gradient(#f9f9f9 0, #f9f9f9 5px, #f5f5f5 6px); }
.tool { display: flex; align-items: center; gap: 4px; height: 22px; flex: none; }
.off { color: #a4a4a4; }
.sigma { font: bold 14px/16px "Liberation Serif", serif; text-align: center; color: #111; }
.caret { display: block; flex: none; width: 12px; height: 16px; margin: 0 -3px 0 -4px; position: relative; }
.caret::after { content: ""; position: absolute; left: 3.500px; top: 7px; border: 2.500px solid transparent; border-top: 3px solid #222; border-bottom: 0; }
.caret.wide { margin-left: -1px; }
.caret.narrow { width: 11px; margin-left: 0; }
.sep { display: block; flex: none; width: 1px; height: 20px; background: #c4c4c4; margin-right: -2px; }
.more { flex: none; width: 8px; font: bold 13px/14px "Liberation Sans", sans-serif; align-self: flex-start; }
.more.first { margin-left: 13px; margin-right: 5px; margin-top: 1px; }
.more.second { margin-left: 31px; margin-right: 3px; margin-top: 1px; }

.workspace { display: flex; height: 640px; }
.nav { width: 165px; flex: none; padding-top: 2px; margin-right: 5px; }
.nav-title { display: flex; align-items: center; height: 15px; background: #0a40d2; color: #fff; font-size: 13px; line-height: 15px; }
.nav-title span { flex: 1; }
.nav-btn { width: 10px; height: 10px; margin-right: 10px; flex: none; }
.nav-btn:last-child { margin-right: 3px; }
.nav-tab { height: 23px; text-align: center; line-height: 22px; border-bottom: 1px solid #a8a8a8; background: #f0f0f0; color: #222; border-top: 1px solid #fafafa; width: 164px; }
.nav-title + .nav-tab { margin-top: 1px; height: 22px; border-top: 1px solid #a8a8a8; }
.nav-box { width: 162px; height: 515px; margin-left: 2px; border: 1px solid #a0a0a0; border-top: 0; background: #fff; display: flex; flex-direction: column; overflow: hidden; }
.nav-tools { display: flex; height: 27px; flex: none; align-items: center; gap: 5px; padding: 3px 0 0 4px; border-bottom: 1px solid #a0a0a0; }
.tree-btn { width: 18px; height: 16px; flex: none; }
.tree { padding-top: 2px; flex: 1; overflow: hidden; white-space: nowrap; }
.node, .leaf { display: flex; align-items: center; height: 16px; position: relative; }
.node { padding-left: 23px; gap: 4px; }
.node::before { content: ""; position: absolute; left: 16px; top: 8px; width: 6px; border-top: 1px dotted #888; }
.chev { position: absolute; left: 7px; top: 4px; width: 6px; height: 6px; border-right: 2px solid #aaa; border-top: 2px solid #aaa; transform: rotate(45deg); }
.chev.down { transform: rotate(135deg); border-color: #444; top: 3px; left: 8px; }
.children { position: relative; }
.children::before { content: ""; position: absolute; left: 32px; top: -2px; height: 90px; border-left: 1px dotted #777; }
.children.short::before { height: 58px; }
.leaf { padding-left: 43px; gap: 4px; }
.leaf::before { content: ""; position: absolute; left: 33px; top: 8px; width: 10px; border-top: 1px dotted #777; }
.lat { font: 10px/16px "DejaVu Sans Mono", monospace; }
.selected { display: flex; align-items: center; gap: 4px; background: #d2d2d2; margin-left: -2px; padding-left: 2px; height: 16px; width: 87px; flex: none; }
.leaf .selected + .i { margin-left: -3px; }
.new { font: bold 9px/9px "Liberation Sans", sans-serif; background: #ffea4d; color: #1a2a4a; align-self: flex-start; margin-left: -4px; padding: 0 1px; margin-top: 1px; }
.cad-book { margin-left: 2px; }
.nav-tab.bottom { margin-top: 1px; height: 22px; line-height: 20px; }

.main { flex: 1; min-width: 0; display: flex; flex-direction: column; }
.toolbar.row { height: 28px; padding-left: 2px; flex: none; gap: 4px; }
.toolbar.row.last { height: 30px; align-items: flex-start; padding-top: 2px; }
.strip { display: flex; align-items: center; gap: 7px; height: 24px; background: #f8f8f8; padding: 0 3px; flex: none; }
.s3 { padding-right: 4px; }
.s4 { padding-right: 3px; }
.tail { width: 28px; padding-left: 2px; }
.grip { display: block; flex: none; width: 2px; height: 18px; border-left: 2px dotted #a8a8a8; margin-right: -3px; }
.grip.mid { margin: 0; }
.grip.tight { margin-right: -6px; }
.combo { display: flex; align-items: center; justify-content: space-between; height: 24px; background: #fefefe; margin-right: -2px; flex: none; padding-right: 1px; }
.combo .caret { margin: 0; }
.c1 { width: 55px; }
.c2 { width: 67px; }
.c4 { width: 55px; margin-left: -2px; }
.split { display: flex; align-items: center; flex: none; }
.pressed { background: #e3f0fb; border: 1px solid #2f8bd6; height: 23px; padding: 0 3px 0 2px; }
.canvas { height: 506px; flex: none; background: #000; overflow: hidden; }
.scene { display: block; }
.rl path { fill: none; stroke: #8a0c14; stroke-width: 1; }
.rl.hot path { stroke: #e01420; }
.grid-mark circle { fill: none; stroke: #1d7a24; stroke-width: 1; }
.grid-mark text { fill: #f0e6e6; font: 11px "Liberation Sans", sans-serif; text-anchor: middle; }
.wall { fill: #8a8a8a; }
.wall-top { fill: #b6b6b6; }
.bl-t { fill: #0073e6; }
.bl-m { fill: #0062c6; }
.bl-d { fill: #005fbf; }
.bl-c { fill: #0068d2; }
.gz, .gg, .gr { fill: none; stroke-width: 3; }
.gz { stroke: #0a78ee; }
.gg { stroke: #1cf01c; }
.gr { stroke: #f01414; }
.gz-f { fill: #0a78ee; }
.gg-f { fill: #1cf01c; }
.gr-f { fill: #f01414; }
.gizmo text { font: 14px "Liberation Sans", sans-serif; }
.lz { fill: #2f7fd8; }
.gizmo .ly { fill: #2fae2f; font-size: 8px; }
.gizmo .lx { fill: #a81c1c; font-size: 10px; }

.statusbar { display: flex; align-items: center; height: 26px; flex: none; white-space: nowrap; padding-left: 2px; }
.st { height: 26px; gap: 5px; padding: 0 6px 0 2px; width: 528px; }
.st .grip { margin-right: 0; }
.st-first { margin-left: -1px; }
.osnap { width: 74px; padding-left: 3px; }
.snap { width: 50px; margin-right: -5px; padding-left: 4px; gap: 2px; }
.vertex { margin-left: 5px; }
.coord { margin-left: 3px; }
.grip.after { margin-left: 4px; }
.grip.after2 { margin-left: 3px; }
.status-text { flex: none; }
.s-sep { margin-left: 20px; margin-right: 0; }
.s-sep2 { margin-left: 26px; margin-right: 0; }
.field-label { margin-left: -1px; width: 19px; flex: none; }
.field-label.y { margin-left: 33px; width: 16px; }
.field { flex: none; width: 57px; height: 26px; margin-top: 8px; padding-right: 20px; text-align: right; line-height: 22px; background: #fff; border: 1px solid #777; position: relative; }
.field.long { width: 66px; margin-right: 4px; }
.spin { position: absolute; right: 5px; top: 2px; border: 4px solid transparent; border-bottom: 4px solid #222; border-top: 0; }
.check { width: 11px; height: 11px; border: 1px solid #777; background: #fff; flex: none; margin: 6px 9px 0 4px; }
.rot { margin-right: 4px; }

.popup-tab { position: absolute; left: 1319px; top: 0; width: 46px; height: 17px; background: #e6e6e6; }
.popup-tab span { display: block; width: 32px; height: 17px; background: #fff; color: #999; line-height: 15px; padding-left: 3px; }
.popup-start { position: absolute; left: 1319px; top: 21px; width: 50px; height: 22px; background: #fcfcfc; border: 1px solid #555; border-bottom-width: 2px; text-align: center; line-height: 20px; padding-right: 5px; box-shadow: 0 2px 2px #999; font-size: 13px; }
```
